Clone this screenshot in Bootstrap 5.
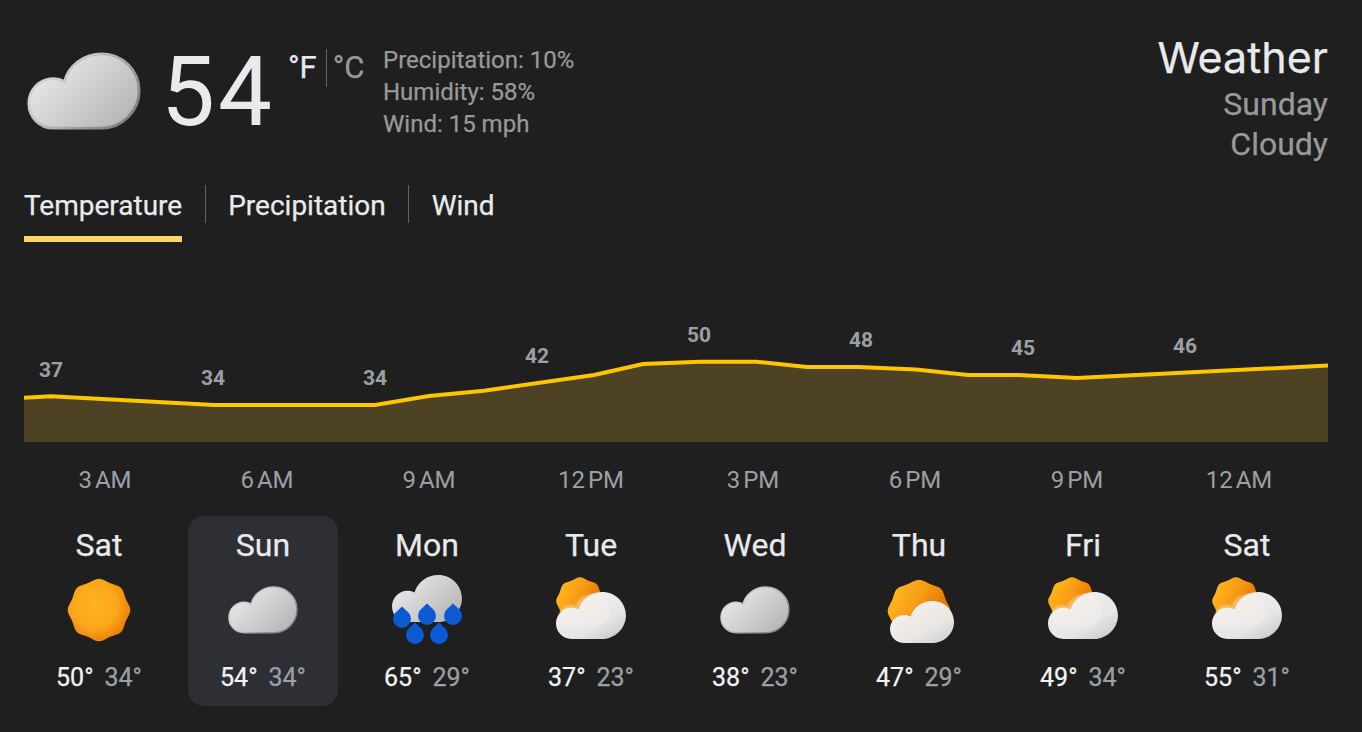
<!DOCTYPE html>
<html lang="en">
<head>
<meta charset="utf-8">
<title>Weather</title>
<link href="https://cdn.jsdelivr.net/npm/bootstrap@5.3.0/dist/css/bootstrap.min.css" rel="stylesheet">
<style>
html,body{height:100%}
body{background:#1f1f1f;color:#e8eaed;font-family:Roboto,"Liberation Sans",sans-serif;overflow:hidden;-webkit-text-stroke:.25px}
.wx-page{padding:30px 34px 0 24px;height:732px}
.wx-head{height:134px}
.wx-now{padding-top:22px;padding-left:2px}
.wx-big-icon{width:116px;height:78px;display:block}
.wx-temp{font-size:96px;line-height:76px;margin-left:19px;width:127px;letter-spacing:3px;padding-top:2px;-webkit-text-stroke:0}
.wx-units{font-size:31px;line-height:38px;height:38px;width:95px;margin-top:-3px}
.wx-unit-off{color:#9a9a9a}
.wx-sep{display:inline-block;width:1px;height:38px;background:#5f6368;margin:0 6px 0 9px;vertical-align:top}
.wx-info{font-size:24px;line-height:32px;color:#999;margin-top:-8px}
.wx-title{color:#999;font-size:32px;line-height:40px}
.wx-title h1{font-family:Inter,Roboto,sans-serif;font-size:43px;line-height:54px;font-weight:400;color:#e8eaed;margin:0}
.wx-tabs{margin-top:21px;height:57px}
.wx-tab{font-size:28px;line-height:38px;height:57px;padding-top:2px;color:#e8eaed}
.wx-tab.on{border-bottom:6px solid #fdd663}
.wx-tab-sep{width:1px;height:38px;background:#5f6368;margin:0 22.5px}
.wx-chart{display:block;width:1304px;height:200px}
.wx-num{font:700 21px Roboto,sans-serif;fill:#9aa0a6;text-anchor:middle;-webkit-text-stroke:0}
.wx-hours{display:grid;grid-template-columns:repeat(8,162px);margin-top:22px;font-size:24px;line-height:32px;color:#9aa0a6;word-spacing:-3px;-webkit-text-stroke:0}
.wx-days{display:grid;grid-template-columns:repeat(8,164px);margin:20px 0 0 -7px}
.wx-day{height:190px;padding-top:10px;width:150px;justify-self:center;border-radius:16px}
.wx-day.on{background:#2e2f34}
.wx-name{font-size:32px;line-height:38px}
.wx-ic{display:block;width:80px;height:70px;margin:11px auto 0}
.wx-range{font-size:25px;line-height:32px;margin-top:17px}
.wx-hi{color:#f1f3f4;margin-right:11px}
.wx-lo{color:#9aa0a6}
</style>
</head>
<body>
<svg width="0" height="0" class="position-absolute">
<defs>
<path id="cl" d="M26 78C11 78 0 66.5 0 52C0 38 11 26 26 26C30 26 34 27 37.500 29C42 12 58 0 77 0C98 0 116 17 116 39C116 60 98 78 77 78Z"/>
<path id="sn" d="M-5.45 -29.65Q0 -33 5.45 -29.65Q10.9 -26.3 17.1 -24.8Q23.33 -23.33 24.8 -17.1Q26.3 -10.9 29.65 -5.45Q33 0 29.65 5.45Q26.3 10.9 24.8 17.1Q23.33 23.33 17.1 24.8Q10.9 26.3 5.45 29.65Q0 33 -5.45 29.65Q-10.9 26.3 -17.1 24.8Q-23.33 23.33 -24.8 17.1Q-26.3 10.9 -29.65 5.45Q-33 0 -29.65 -5.45Q-26.3 -10.9 -24.8 -17.1Q-23.33 -23.33 -17.1 -24.8Q-10.9 -26.3 -5.45 -29.65Z"/>
<path id="dr" d="M0 -12.5L6.400 -6.400A9 9 0 1 1 -6.400 -6.400Z"/>
<linearGradient id="gc" x1="0" y1="0.2" x2="1" y2="0.9"><stop offset="0" stop-color="#ececec"/><stop offset="1" stop-color="#b2b2b2"/></linearGradient>
<linearGradient id="gs" x1="0" y1="0" x2="1" y2="0.6"><stop offset="0.3" stop-color="#d0d0d0"/><stop offset="1" stop-color="#80848a"/></linearGradient>
<linearGradient id="gw" x1="0.1" y1="0" x2="0.95" y2="1"><stop offset="0" stop-color="#f6f3f0"/><stop offset="0.65" stop-color="#e6e6e7"/><stop offset="0.87" stop-color="#d0d2d4"/><stop offset="1" stop-color="#8f8f8f"/></linearGradient>
<linearGradient id="gt" x1="0.1" y1="0" x2="0.95" y2="1"><stop offset="0" stop-color="#f8f5f2"/><stop offset="0.65" stop-color="#e9e5e1"/><stop offset="1" stop-color="#c9ced4"/></linearGradient>
<radialGradient id="gy" cx="0.42" cy="0.42" r="0.62"><stop offset="0" stop-color="#ffb31f"/><stop offset="0.6" stop-color="#fca61b"/><stop offset="1" stop-color="#e97c05"/></radialGradient>
<linearGradient id="gz" x1="0.1" y1="0.2" x2="0.9" y2="0.6"><stop offset="0" stop-color="#ffb520"/><stop offset="0.45" stop-color="#f89c14"/><stop offset="0.85" stop-color="#e97c05"/></linearGradient>
<filter id="soft" x="-20%" y="-20%" width="140%" height="140%"><feGaussianBlur stdDeviation="3"/></filter>
</defs>
</svg>
<main class="wx-page">
<header class="wx-head d-flex justify-content-between align-items-start">
<div class="wx-now d-flex align-items-start">
<svg class="wx-big-icon" viewBox="-2 -2 120 82"><use href="#cl" fill="url(#gc)" stroke="url(#gs)" stroke-width="3"/></svg>
<div class="wx-temp">54</div>
<div class="wx-units text-nowrap"><span>°F</span><span class="wx-sep"></span><span class="wx-unit-off">°C</span></div>
<div class="wx-info">
<div>Precipitation: 10%</div>
<div>Humidity: 58%</div>
<div>Wind: 15 mph</div>
</div>
</div>
<div class="wx-title text-end">
<h1>Weather</h1>
<div>Sunday</div>
<div>Cloudy</div>
</div>
</header>
<nav class="wx-tabs d-flex align-items-start">
<div class="wx-tab on">Temperature</div>
<div class="wx-tab-sep"></div>
<div class="wx-tab">Precipitation</div>
<div class="wx-tab-sep"></div>
<div class="wx-tab">Wind</div>
</nav>
<svg class="wx-chart" viewBox="24 242 1304 200">
<path fill="#4e4224" d="M24 397.700L51 396.300L214 405L375 405L429 396L484 390.700L594 375L643 364L700 361.700L756 361.700L807 367L858 367L916 369.500L968 375L1019 375L1077 378L1328 365.600L1328 442L24 442Z"/>
<path fill="none" stroke="#fdc600" stroke-width="4" d="M24 397.700L51 396.300L214 405L375 405L429 396L484 390.700L594 375L643 364L700 361.700L756 361.700L807 367L858 367L916 369.500L968 375L1019 375L1077 378L1328 365.600"/>
<text class="wx-num" x="51" y="377">37</text>
<text class="wx-num" x="213" y="385">34</text>
<text class="wx-num" x="375" y="385">34</text>
<text class="wx-num" x="537" y="363">42</text>
<text class="wx-num" x="699" y="342">50</text>
<text class="wx-num" x="861" y="347">48</text>
<text class="wx-num" x="1023" y="355">45</text>
<text class="wx-num" x="1185" y="353">46</text>
</svg>
<div class="wx-hours text-center">
<div>3 AM</div><div>6 AM</div><div>9 AM</div><div>12 PM</div><div>3 PM</div><div>6 PM</div><div>9 PM</div><div>12 AM</div>
</div>
<section class="wx-days text-center">
<div class="wx-day"><div class="wx-name">Sat</div>
<svg class="wx-ic" viewBox="0 0 80 70"><use href="#sn" transform="translate(40 35)" fill="url(#gy)"/></svg>
<div class="wx-range"><span class="wx-hi">50°</span><span class="wx-lo">34°</span></div></div>
<div class="wx-day on"><div class="wx-name">Sun</div>
<svg class="wx-ic" viewBox="0 0 80 70"><use href="#cl" transform="translate(6 12) scale(.586)" fill="url(#gc)" stroke="url(#gs)" stroke-width="2.500"/></svg>
<div class="wx-range"><span class="wx-hi">54°</span><span class="wx-lo">34°</span></div></div>
<div class="wx-day"><div class="wx-name">Mon</div>
<svg class="wx-ic" viewBox="0 0 80 70"><use href="#cl" transform="translate(5 0) scale(.603)" fill="url(#gc)"/>
<g fill="#0b5ad4"><use href="#dr" transform="translate(15 44)"/><use href="#dr" transform="translate(40 41)"/><use href="#dr" transform="translate(66 41)"/><use href="#dr" transform="translate(28 60)"/><use href="#dr" transform="translate(52 60)"/></g></svg>
<div class="wx-range"><span class="wx-hi">65°</span><span class="wx-lo">29°</span></div></div>
<div class="wx-day"><div class="wx-name">Tue</div>
<svg class="wx-ic" viewBox="0 0 80 70"><use href="#sn" transform="translate(29 26) scale(.76)" fill="url(#gz)"/><use href="#cl" transform="translate(5 17) scale(.603)" fill="url(#gw)"/><use href="#cl" transform="translate(8 19) scale(.44 .42)" fill="#f9f2ec" opacity=".4" filter="url(#soft)"/></svg>
<div class="wx-range"><span class="wx-hi">37°</span><span class="wx-lo">23°</span></div></div>
<div class="wx-day"><div class="wx-name">Wed</div>
<svg class="wx-ic" viewBox="0 0 80 70"><use href="#cl" transform="translate(6 12) scale(.586)" fill="url(#gc)" stroke="url(#gs)" stroke-width="2.500"/></svg>
<div class="wx-range"><span class="wx-hi">38°</span><span class="wx-lo">23°</span></div></div>
<div class="wx-day"><div class="wx-name">Thu</div>
<svg class="wx-ic" viewBox="0 0 80 70"><use href="#sn" transform="translate(40 36)" fill="url(#gz)"/><use href="#cl" transform="translate(11 26) scale(.552 .54)" fill="url(#gt)"/></svg>
<div class="wx-range"><span class="wx-hi">47°</span><span class="wx-lo">29°</span></div></div>
<div class="wx-day"><div class="wx-name">Fri</div>
<svg class="wx-ic" viewBox="0 0 80 70"><use href="#sn" transform="translate(29 26) scale(.76)" fill="url(#gz)"/><use href="#cl" transform="translate(5 17) scale(.603)" fill="url(#gw)"/><use href="#cl" transform="translate(8 19) scale(.44 .42)" fill="#f9f2ec" opacity=".4" filter="url(#soft)"/></svg>
<div class="wx-range"><span class="wx-hi">49°</span><span class="wx-lo">34°</span></div></div>
<div class="wx-day"><div class="wx-name">Sat</div>
<svg class="wx-ic" viewBox="0 0 80 70"><use href="#sn" transform="translate(29 26) scale(.76)" fill="url(#gz)"/><use href="#cl" transform="translate(5 17) scale(.603)" fill="url(#gw)"/><use href="#cl" transform="translate(8 19) scale(.44 .42)" fill="#f9f2ec" opacity=".4" filter="url(#soft)"/></svg>
<div class="wx-range"><span class="wx-hi">55°</span><span class="wx-lo">31°</span></div></div>
</section>
</main>
</body>
</html>
